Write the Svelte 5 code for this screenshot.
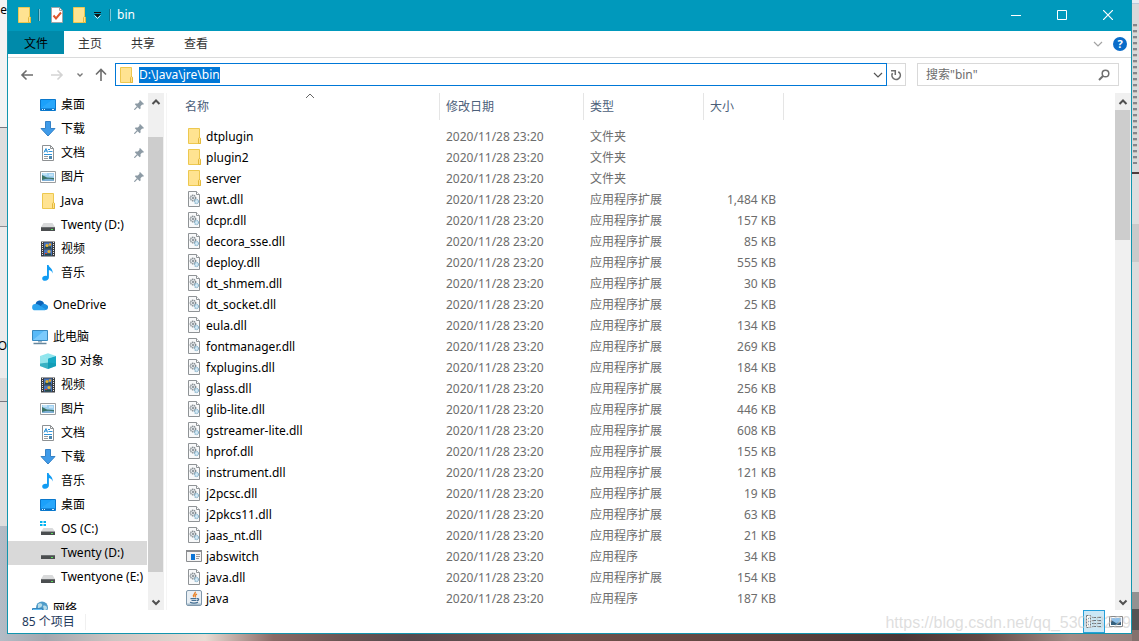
<script>
  import { onMount } from 'svelte';

  let path = $state('D:\\Java\\jre\\bin');
  let search = $state('');
  let selected = $state('drive-d');
  let view = $state('details');
  let pathInput;

  const tabs = ['主页', '共享', '查看'];

  const groups = [
    [
      { id: 'q-desktop', name: '桌面', icon: 'desktop', pinned: true },
      { id: 'q-download', name: '下载', icon: 'download', pinned: true },
      { id: 'q-docs', name: '文档', icon: 'document', pinned: true },
      { id: 'q-pics', name: '图片', icon: 'picture', pinned: true },
      { id: 'q-java', name: 'Java', icon: 'folder' },
      { id: 'q-d', name: 'Twenty (D:)', icon: 'drive' },
      { id: 'q-video', name: '视频', icon: 'video' },
      { id: 'q-music', name: '音乐', icon: 'music' },
    ],
    [{ id: 'onedrive', name: 'OneDrive', icon: 'cloud', root: true }],
    [
      { id: 'pc', name: '此电脑', icon: 'computer', root: true },
      { id: 'objects', name: '3D 对象', icon: 'cube' },
      { id: 'video', name: '视频', icon: 'video' },
      { id: 'pics', name: '图片', icon: 'picture' },
      { id: 'docs', name: '文档', icon: 'document' },
      { id: 'download', name: '下载', icon: 'download' },
      { id: 'music', name: '音乐', icon: 'music' },
      { id: 'desktop', name: '桌面', icon: 'desktop' },
      { id: 'drive-c', name: 'OS (C:)', icon: 'system' },
      { id: 'drive-d', name: 'Twenty (D:)', icon: 'drive' },
      { id: 'drive-e', name: 'Twentyone (E:)', icon: 'drive' },
    ],
    [{ id: 'network', name: '网络', icon: 'network', root: true }],
  ];

  const types = { folder: '文件夹', dll: '应用程序扩展', app: '应用程序', java: '应用程序' };

  const files = [
    ['dtplugin', 'folder', ''],
    ['plugin2', 'folder', ''],
    ['server', 'folder', ''],
    ['awt.dll', 'dll', '1,484 KB'],
    ['dcpr.dll', 'dll', '157 KB'],
    ['decora_sse.dll', 'dll', '85 KB'],
    ['deploy.dll', 'dll', '555 KB'],
    ['dt_shmem.dll', 'dll', '30 KB'],
    ['dt_socket.dll', 'dll', '25 KB'],
    ['eula.dll', 'dll', '134 KB'],
    ['fontmanager.dll', 'dll', '269 KB'],
    ['fxplugins.dll', 'dll', '184 KB'],
    ['glass.dll', 'dll', '256 KB'],
    ['glib-lite.dll', 'dll', '446 KB'],
    ['gstreamer-lite.dll', 'dll', '608 KB'],
    ['hprof.dll', 'dll', '155 KB'],
    ['instrument.dll', 'dll', '121 KB'],
    ['j2pcsc.dll', 'dll', '19 KB'],
    ['j2pkcs11.dll', 'dll', '63 KB'],
    ['jaas_nt.dll', 'dll', '21 KB'],
    ['jabswitch', 'app', '34 KB'],
    ['java.dll', 'dll', '154 KB'],
    ['java', 'java', '187 KB'],
  ];

  onMount(() => {
    pathInput.focus();
    pathInput.select();
  });
</script>

{#snippet icon(kind)}
  <svg class="icon" width="16" height="16" viewBox="0 0 16 16" aria-hidden="true">
    {#if kind === 'folder'}
      <path d="M2.500.5h11v10h1v5h-12z" fill="#ffe391" stroke="#edc84f" />
      <path d="M12.500 15.500v-5l1-1.200 1 1.200v5z" fill="#ffe08a" stroke="#e3b93c" />
    {:else if kind === 'dll'}
      <path d="M2.500.5h8l3 3v12h-11z" fill="#f8f9fa" stroke="#8f9396" />
      <path d="M10.500.5v3h3" fill="#fff" stroke="#8f9396" />
      <circle cx="7" cy="7" r="2.700" fill="#dfe3e6" stroke="#858c91" stroke-width="1.400" stroke-dasharray="1.300 .6" />
      <circle cx="7" cy="7" r="1" fill="#7f878d" />
      <circle cx="10.500" cy="10.500" r="2" fill="#d9ecf7" stroke="#8db6cd" stroke-width="1.300" stroke-dasharray="1.200 .5" />
    {:else if kind === 'app'}
      <path d="M.5 2.500h15v11H.5z" fill="#f4f4f4" stroke="#8b8d90" />
      <path d="M0 2h16v2H0z" fill="#8b8d90" />
      <path d="M5 6h4v6H5z" fill="#0a74d6" />
      <path d="M10 6.500h4M10 8.500h4M10 10.500h3" stroke="#9a9c9e" />
    {:else if kind === 'java'}
      <rect x=".5" y=".5" width="15" height="15" rx="1.500" fill="#e9eff4" stroke="#7f97ab" />
      <path d="M1 13.500h14V15H1z" fill="#a5bccd" />
      <path d="M9.200 1.800c1 2-3.200 2.700-1.500 5.200M11 4.200c-2 .8-2.300 1.500-1.300 3.200" fill="none" stroke="#e8842c" stroke-width="1.400" />
      <path d="M4.500 8.700h6M5.500 10.500h5M4 12.300c2 .8 6 .8 8 0M11 8.700c2.500-.5 2 1.800 0 2" fill="none" stroke="#456f93" stroke-width="1.200" />
    {:else if kind === 'desktop'}
      <path d="M.5 2.500h15v11H.5z" fill="#1ba1fa" stroke="#0a78cc" />
      <path d="M1 11.500h14v1.500H1z" fill="#0b6fc0" />
      <path d="M2 12.500h1M4 12.500h1M12 12.500h2" stroke="#d6efff" />
      <path d="M1 11L12 3h3v8z" fill="#36adfc" opacity=".6" />
    {:else if kind === 'download'}
      <path d="M5.500.5h5v7h4.500L8 15 1 7.500h4.500z" fill="#3f9be9" stroke="#3582c7" />
    {:else if kind === 'document'}
      <path d="M2.500.5h8l3 3v12h-11z" fill="#fff" stroke="#8e9193" />
      <path d="M10.500.5v3h3" fill="none" stroke="#8e9193" />
      <path d="M4 7.500l2-4 1.500 4M4.500 6h3M8 4.500h2M8.500 6.500h4M4 9.500h8" fill="none" stroke="#3093d7" />
      <path d="M4 11.500h4M4 13.500h4" stroke="#989b9d" />
      <path d="M9 11h3v3H9z" fill="#4b86ae" />
    {:else if kind === 'picture'}
      <path d="M.5 2.500h15v11H.5z" fill="#fff" stroke="#9b9ea0" />
      <path d="M2 4h12v8H2z" fill="#9fd0f0" />
      <path d="M2 6l5 2.500 7 .5v3H2z" fill="#3b7467" />
      <path d="M2 11c4-1.500 8-1.500 12-.5V12H2z" fill="#7fb0d6" />
      <path d="M3 5h4M9 6h4" stroke="#e6f5fd" />
    {:else if kind === 'drive'}
      <path d="M3.500 6h9L15 10H1z" fill="#d9dadb" />
      <path d="M1 10h14v4H1z" fill="#4b4e50" />
      <path d="M1 10.500h14" stroke="#6b6e70" />
      <path d="M11 12h2v1h-2z" fill="#5ce05c" />
    {:else if kind === 'system'}
      <path d="M0 0h2.500v2H0zM3.500 0H6v2H3.500zM0 3h2.500v2H0zM3.500 3H6v2H3.500z" fill="#00b2f0" />
      <path d="M3.500 7h9L15 10.500H1z" fill="#d9dadb" />
      <path d="M1 10.500h14V14H1z" fill="#4b4e50" />
      <path d="M11 12h2v1h-2z" fill="#5ce05c" />
    {:else if kind === 'video'}
      <path d="M1 .5h14v15H1z" fill="#3a3c40" />
      <path d="M2.500 1v14M13.500 1v14" stroke="#e8e8e8" stroke-dasharray="1 1" />
      <path d="M4 1.500h8v6H4zM4 8.500h8v6H4z" fill="#4774bd" />
      <path d="M5 6.500h6M5 13.500h6" stroke="#284a44" stroke-width="2" />
      <circle cx="7" cy="4.500" r="1.500" fill="#e5b434" />
      <circle cx="10" cy="3.500" r="1.200" fill="#efa51c" />
      <circle cx="9" cy="10.500" r="1.600" fill="#e5b434" />
      <path d="M5 12h2v1H5z" fill="#d04331" />
    {:else if kind === 'music'}
      <path d="M7 0h1.600c.3 2.500 4.700 3.500 4 8.500-.3-2-2-3.200-3.700-3.500v7.500c0 1.900-1.700 3.300-3.700 3.300-1.900 0-3-1-3-2.400 0-1.800 2.100-3.100 4.800-2.500z" fill="#119cf3" />
    {:else if kind === 'cloud'}
      <path d="M3.500 7.500A4.500 4.500 0 0 1 12 6l-2 6H4z" fill="#0b63b8" />
      <path d="M10 7.500A3.500 3.500 0 0 1 14 7.500 2.800 2.800 0 0 1 13.500 13H6z" fill="#1b8fe0" />
      <path d="M3 13.300a3.100 3.100 0 0 1 .5-6.200c2.500-.3 3.500 1 5 2l5.500 3.500-1 .7z" fill="#2ba3ee" />
    {:else if kind === 'computer'}
      <path d="M.5 1.500h15v10H.5z" fill="#59baf8" stroke="#3989bf" />
      <path d="M1 11L12 2h3v9z" fill="#93d6ff" opacity=".6" />
      <path d="M6 12h4v1.500H6z" fill="#9eb4c3" />
      <path d="M1.500 14.500h13" stroke="#65869c" stroke-width="1.500" />
    {:else if kind === 'cube'}
      <path d="M0 3l8-2.800L16 3 8 5.500z" fill="#8fe6ee" />
      <path d="M0 3l8 2.500V16l-8-3z" fill="#62d0de" />
      <path d="M16 3L8 5.500V16l8-3z" fill="#17a9c4" />
      <path d="M0 10.500l8-1 8 1V13l-8 3-8-3z" fill="#0f92a8" opacity=".5" />
      <path d="M0 3l8 2.500v4l-8 1z" fill="#a9eef2" opacity=".7" />
    {:else if kind === 'network'}
      <circle cx="10" cy="6.500" r="6" fill="#4f9cc9" />
      <path d="M6 3c3-2 5 0 4 2s-3 1-4 3zM11 5c2-1 4 0 4 2s-2 2-3 2z" fill="#b7dbe8" />
      <path d="M.5 7.500h10v6H.5z" fill="#61bdf5" stroke="#3b85b9" />
    {/if}
  </svg>
{/snippet}

{#snippet chevron(dir)}
  <svg width="10" height="10" viewBox="0 0 10 10" aria-hidden="true">
    <path d={dir === 'up' ? 'M1.500 7L5 3.500 8.500 7' : 'M1.500 3.500L5 7l3.500-3.500'} fill="none" stroke="currentColor" stroke-width="2" />
  </svg>
{/snippet}

{#snippet scrollbar(before, size, after)}
  <div class="scrollbar">
    <button aria-label="向上滚动">{@render chevron('up')}</button>
    <div style:flex-grow={before}></div>
    <div class="thumb" style:flex-grow={size}></div>
    <div style:flex-grow={after}></div>
    <button aria-label="向下滚动">{@render chevron('down')}</button>
  </div>
{/snippet}

<div class="screen">
  <div class="behind left" aria-hidden="true">
    <span class="peek-top">ne</span>
    <span class="peek-mid">O</span>
  </div>
  <div class="behind right" aria-hidden="true"></div>

  <main class="window">
    <header class="titlebar">
      {@render icon('folder')}
      <i class="sep"></i>
      <button class="quick" aria-label="属性">
        <svg width="16" height="16" viewBox="0 0 16 16">
          <path d="M2.500.5h8l3 3v12h-11z" fill="#fff" stroke="#a2a5a7" />
          <path d="M10.500.5v3h3" fill="none" stroke="#a2a5a7" />
          <path d="M4.500 8.500l2.500 3 5-6" fill="none" stroke="#e0562b" stroke-width="2" />
        </svg>
      </button>
      <button class="quick" aria-label="新建文件夹">{@render icon('folder')}</button>
      <button class="more" aria-label="自定义快速访问工具栏">
        <svg width="8" height="8" viewBox="0 0 8 8">
          <path d="M0 1.500h7" stroke="#111" />
          <path d="M0 3h7L3.500 6.500z" fill="#111" />
          <path d="M.5 4.500l3 3 3-3" fill="none" stroke="#d5eef5" />
        </svg>
      </button>
      <i class="sep"></i>
      <h1>bin</h1>
      <div class="controls">
        <button aria-label="最小化"><svg width="10" height="10"><path d="M0 5.500h10" stroke="#fff" /></svg></button>
        <button aria-label="最大化"><svg width="10" height="10"><path d="M.5.5h9v9h-9z" fill="none" stroke="#fff" /></svg></button>
        <button aria-label="关闭"><svg width="10" height="10"><path d="M0 0l10 10M10 0L0 10" stroke="#fff" stroke-width="1.200" /></svg></button>
      </div>
    </header>

    <nav class="tabs">
      <button class="file">文件</button>
      {#each tabs as tab}
        <button>{tab}</button>
      {/each}
      <button class="expand" aria-label="展开功能区">
        <svg width="10" height="10" viewBox="0 0 10 10"><path d="M1 3l4 4 4-4" fill="none" stroke="#a3a3a3" stroke-width="1.200" /></svg>
      </button>
      <button class="help" aria-label="帮助">?</button>
    </nav>

    <div class="address-row">
      <div class="history">
        <button aria-label="返回"><svg width="14" height="12" viewBox="0 0 14 12"><path d="M13 6H2M6.500 1.500L2 6l4.500 4.500" fill="none" stroke="#6d6d6d" stroke-width="1.600" /></svg></button>
        <button class="forward" aria-label="前进"><svg width="14" height="12" viewBox="0 0 14 12"><path d="M1 6h11M7.500 1.500L12 6l-4.500 4.500" fill="none" stroke="#d3d3d3" stroke-width="1.600" /></svg></button>
        <button class="recent" aria-label="最近浏览的位置"><svg width="8" height="8" viewBox="0 0 8 8"><path d="M1.500 2.500L4 5l2.500-2.500" fill="none" stroke="#777" stroke-width="1.400" /></svg></button>
        <button class="up" aria-label="上移"><svg width="14" height="14" viewBox="0 0 14 14"><path d="M7 13V2M2 6.500L7 1.500l5 5" fill="none" stroke="#6d6d6d" stroke-width="1.600" /></svg></button>
      </div>
      <div class="path">
        {@render icon('folder')}
        <input type="text" aria-label="地址" spellcheck="false" bind:value={path} bind:this={pathInput} />
        <button aria-label="以前的位置"><svg width="10" height="10" viewBox="0 0 10 10"><path d="M1 3l4 4 4-4" fill="none" stroke="#555" stroke-width="1.200" /></svg></button>
      </div>
      <button class="refresh" aria-label="刷新">
        <svg width="12" height="12" viewBox="0 0 12 12">
          <path d="M8.300 2.700a4.200 4.200 0 1 1-5.800 1.500" fill="none" stroke="#6d6d6d" stroke-width="1.600" />
          <path d="M1 1.700h4.300v4.300" fill="none" stroke="#6d6d6d" stroke-width="1.500" />
        </svg>
      </button>
      <div class="search">
        <input type="text" aria-label="搜索" placeholder={'搜索"bin"'} bind:value={search} />
        <svg width="12" height="12" viewBox="0 0 12 12" aria-hidden="true">
          <circle cx="7.500" cy="4.500" r="3.300" fill="none" stroke="#6f6f6f" stroke-width="1.500" />
          <path d="M5 7L1 11" stroke="#6f6f6f" stroke-width="2" />
        </svg>
      </div>
    </div>

    <div class="body">
      <aside>
        <div class="tree">
          {#each groups as group}
            <ul>
              {#each group as item}
                <li>
                  <button class:root={item.root} class:selected={selected === item.id} onclick={() => (selected = item.id)}>
                    {@render icon(item.icon)}
                    <span>{item.name}</span>
                    {#if item.pinned}
                      <svg class="pin" width="10" height="10" viewBox="0 0 10 10" aria-hidden="true">
                        <path d="M6 0l4 4-1 .7-.8-.2-1.700 1.700.1 2.300-.9.700-4.900-4.900.700-.9 2.300.1L5.500 1.800 5.300.8z" fill="#8d9ba5" />
                        <path d="M3.500 6.500L.3 9.700" stroke="#8d9ba5" stroke-width="1.200" />
                      </svg>
                    {/if}
                  </button>
                </li>
              {/each}
            </ul>
          {/each}
        </div>
        {@render scrollbar(27, 435, 21)}
      </aside>

      <section class="content">
        <table>
          <thead>
            <tr>
              <th class="name">
                <span>名称</span>
                <svg class="sort" width="10" height="6" viewBox="0 0 10 6" aria-hidden="true"><path d="M1 5l4-4 4 4" fill="none" stroke="#666" /></svg>
              </th>
              <th class="date"><span>修改日期</span></th>
              <th class="type"><span>类型</span></th>
              <th class="size"><span>大小</span></th>
            </tr>
          </thead>
          <tbody>
            {#each files as [name, kind, size]}
              <tr>
                <td class="file-name"><div>{@render icon(kind)}{name}</div></td>
                <td>2020/11/28 23:20</td>
                <td>{types[kind]}</td>
                <td class="num">{size}</td>
              </tr>
            {/each}
          </tbody>
        </table>
      </section>
      {@render scrollbar(0, 130, 353)}
    </div>

    <footer>
      <span class="count">85 个项目</span>
      <div class="views">
        <button class:active={view === 'details'} aria-label="详细信息" onclick={() => (view = 'details')}>
          <svg width="16" height="14" viewBox="0 0 16 14">
            <path d="M.5.5h4v12h-4z" fill="#fff" stroke="#777" stroke-dasharray="2 1" />
            <path d="M2 3.500h1M2 6.500h1M2 9.500h1" stroke="#3b86b7" />
            <path d="M6 2.500h4M11 2.500h4M6 5.500h4M11 5.500h4M6 8.500h4M11 8.500h4M6 11.500h4M11 11.500h4" stroke="#667680" />
          </svg>
        </button>
        <button class:active={view === 'icons'} aria-label="大缩略图" onclick={() => (view = 'icons')}>
          <svg width="14" height="12" viewBox="0 0 14 12">
            <path d="M.5.5h13v10H.5z" fill="#fff" stroke="#888" />
            <path d="M2 2h10v7H2z" fill="#8ec0ea" />
            <path d="M2 4l5 3 5-1v3H2z" fill="#35607c" />
          </svg>
        </button>
      </div>
    </footer>
  </main>

  <span class="watermark">https://blog.csdn.net/qq_53068229</span>
</div>

<style>
  :global(body) {
    margin: 0;
    overflow: hidden;
  }

  .screen {
    position: relative;
    box-sizing: border-box;
    height: 100vh;
    padding: 0 7px 7px;
    background: linear-gradient(90deg, #b4bcc6 0, #a3a7ae 4%, #cdc5c2 10%, #e9dcd4 18%, #8a6a66 24%, #6b5553 30%, #574a4e 36%, #70524c 50%, #60443f 66%, #493535 79%, #604844 86%, #a38c86 94%, #94807c 100%);
    font: 12px/16px "Noto Sans", "Noto Sans CJK SC", sans-serif;
    color: #000;
  }

  .behind {
    position: absolute;
    top: 0;
    width: 7px;
    overflow: hidden;
  }

  .behind.left {
    left: 0;
    height: 82%;
    background: linear-gradient(#f3f3f3 0 127px, #77777f 127px 128px, #dedede 128px 226px, #8d8d92 226px 227px, #ebebeb 227px 378px, #d8d8d8 378px 401px, #77777f 401px 402px, #dedede 402px);
  }

  .behind.right {
    right: 0;
    height: 100%;
    background: linear-gradient(#e8edf3 0 3px, #b9cadb 3px 4px, #d9d9da 4px 172px, #503c3d 172px 174px, #dedede 174px 224px, #cacaca 224px 262px, #dcdcdc 262px 592px, #929292 592px 609px, #545454 609px 630px, #84716d 630px);
  }

  .behind.right::before {
    content: '';
    position: absolute;
    inset: 24px 2px auto 1px;
    height: 140px;
    background: repeating-linear-gradient(#85868c 0 2px, #c8bdb3 2px 3px, #d9d9da 3px 6px);
  }

  .peek-top,
  .peek-mid {
    position: absolute;
    right: 0;
    top: 2px;
  }

  .peek-mid {
    top: 338px;
  }

  .window {
    position: relative;
    display: flex;
    flex-direction: column;
    box-sizing: border-box;
    height: 100%;
    border: solid #1295ae;
    border-width: 0 1px 1px;
    background: #fff;
  }

  button {
    display: flex;
    align-items: center;
    justify-content: center;
    padding: 0;
    border: 0;
    background: none;
    font: inherit;
    color: inherit;
  }

  input {
    flex: 1;
    min-width: 0;
    padding: 0;
    border: 0;
    outline: 0;
    background: none;
    font: inherit;
  }

  svg {
    display: block;
    flex: none;
  }

  .titlebar {
    display: flex;
    align-items: center;
    box-sizing: border-box;
    height: 31px;
    padding: 0 0 1px 8px;
    background: #0099bc;
    color: #fff;
  }

  .sep {
    width: 1px;
    height: 12px;
    margin: 0 6px;
    border-left: 1px solid #087790;
    background: #7cc6d8;
  }

  .quick {
    width: 22px;
  }

  .more {
    width: 13px;
    margin-left: 1px;
  }

  .more + .sep {
    margin-left: 5px;
  }

  .titlebar h1 {
    margin: 0;
    font-size: 12px;
    font-weight: 400;
  }

  .controls {
    display: flex;
    align-self: stretch;
    margin-left: auto;
  }

  .controls button {
    width: 46px;
  }

  .tabs {
    display: flex;
    align-items: center;
    gap: 1px;
    height: 26px;
    border-bottom: 1px solid #dadbdc;
    color: #333;
  }

  .tabs button {
    height: 23px;
    padding: 2px 14px 0;
    margin-bottom: 3px;
  }

  .tabs .file {
    padding: 2px 16px 0;
    margin-right: -1px;
    background: #008aaa;
    color: #000;
  }

  .tabs .expand {
    padding: 0 9px;
    margin: 0 0 0 auto;
  }

  .tabs .help {
    width: 14px;
    height: 14px;
    padding: 0;
    margin: 0 4px 0 0;
    border-radius: 50%;
    background: #0a6cc9;
    color: #fff;
    font-size: 11px;
    font-weight: 700;
  }

  .address-row {
    display: flex;
    padding: 5px 12px 7px 0;
  }

  .address-row > * {
    box-sizing: border-box;
    height: 23px;
  }

  .history {
    display: flex;
    align-items: center;
    width: 107px;
    padding-left: 12px;
  }

  .history .forward {
    margin-left: 16px;
  }

  .history .recent {
    margin-left: 12px;
  }

  .history .up {
    margin-left: 10px;
  }

  .path {
    display: flex;
    flex: 1;
    align-items: center;
    gap: 5px;
    padding-left: 2px;
    border: 1px solid #0078d7;
  }

  .path input::selection {
    background: #0078d7;
    color: #fff;
  }

  .path button {
    width: 16px;
  }

  .refresh {
    width: 19px;
    margin-right: 11px;
    border: 1px solid #d9d9d9;
    border-left: 0;
  }

  .search {
    display: flex;
    align-items: center;
    width: 202px;
    padding: 0 8px;
    border: 1px solid #d9d9d9;
  }

  .search input::placeholder {
    color: #6d6d6d;
    opacity: 1;
  }

  .body {
    display: flex;
    flex: 1;
    min-height: 0;
  }

  aside {
    display: flex;
    width: 158px;
    border-right: 1px solid #f5f5f5;
  }

  .tree {
    flex: 1;
    min-width: 0;
    overflow: hidden;
  }

  ul {
    margin: 0 0 8px;
    padding: 0;
    list-style: none;
  }

  .tree button {
    justify-content: flex-start;
    gap: 5px;
    width: 139px;
    height: 24px;
    padding: 0 3px 0 32px;
    white-space: nowrap;
  }

  .tree .root {
    padding-left: 24px;
  }

  .tree .selected {
    background: #d9d9d9;
  }

  .pin {
    margin-left: auto;
  }

  .scrollbar {
    display: flex;
    flex-direction: column;
    width: 16px;
    margin-right: 2px;
    background: #f0f0f0;
    color: #505050;
  }

  .body > .scrollbar {
    margin-right: 0;
  }

  .scrollbar button {
    height: 17px;
  }

  .thumb {
    width: 15px;
    background: #cdcdcd;
  }

  .content {
    flex: 1;
    min-width: 0;
    padding-left: 12px;
    overflow: hidden;
  }

  table {
    width: 605px;
    border-collapse: collapse;
    table-layout: fixed;
    color: #6d6d6d;
  }

  th {
    position: relative;
    height: 33px;
    padding: 0;
    font-weight: 400;
    text-align: left;
    vertical-align: top;
    color: #4c607a;
  }

  th span {
    display: block;
    padding-left: 6px;
    border-right: 1px solid #e5e5e5;
    line-height: 27px;
  }

  .name {
    width: 261px;
  }

  .date {
    width: 144px;
  }

  .type {
    width: 120px;
  }

  .size {
    width: 80px;
  }

  .sort {
    position: absolute;
    top: 0;
    left: calc(50% - 5px);
  }

  td {
    height: 21px;
    padding: 0 0 0 6px;
    line-height: 21px;
    white-space: nowrap;
  }

  .file-name {
    padding-left: 7px;
    color: #000;
  }

  .file-name div {
    display: flex;
    gap: 4px;
  }

  .file-name .icon {
    margin-top: 2px;
  }

  td.num {
    padding: 0 8px 0 0;
    text-align: right;
  }

  footer {
    display: flex;
    align-items: center;
    height: 23px;
    padding-left: 14px;
    color: #1e395b;
  }

  .count {
    padding-right: 10px;
    border-right: 1px solid #f0f0f0;
  }

  .views {
    display: flex;
    margin-left: auto;
    padding-right: 4px;
  }

  .views button {
    box-sizing: border-box;
    width: 22px;
    height: 23px;
    border: 1px solid transparent;
  }

  .views .active {
    border-color: #26a0da;
    background: #cbe8f6;
  }

  .watermark {
    position: absolute;
    right: 8px;
    bottom: 8px;
    font: 16px/20px "Liberation Sans", Arial, sans-serif;
    color: rgba(200, 200, 200, 0.6);
    pointer-events: none;
  }
</style>
